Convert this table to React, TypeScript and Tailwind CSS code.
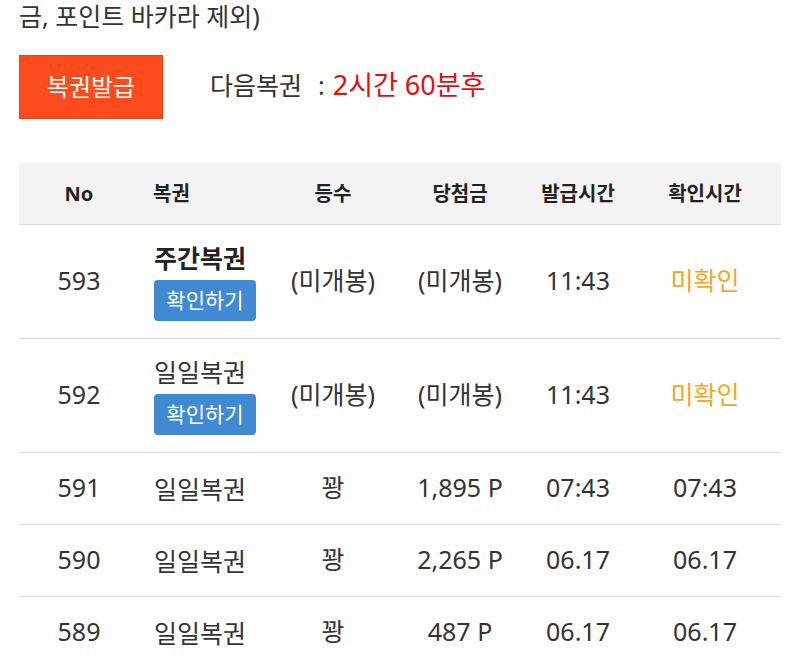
const ROWS = [
  { no: 593, name: "주간복권", bold: true, open: false, grade: "(미개봉)", prize: "(미개봉)", issued: "11:43", checked: "미확인" },
  { no: 592, name: "일일복권", bold: false, open: false, grade: "(미개봉)", prize: "(미개봉)", issued: "11:43", checked: "미확인" },
  { no: 591, name: "일일복권", bold: false, open: true, grade: "꽝", prize: "1,895 P", issued: "07:43", checked: "07:43" },
  { no: 590, name: "일일복권", bold: false, open: true, grade: "꽝", prize: "2,265 P", issued: "06.17", checked: "06.17" },
  { no: 589, name: "일일복권", bold: false, open: true, grade: "꽝", prize: "487 P", issued: "06.17", checked: "06.17" },
];

const GRID = "grid grid-cols-[120px_134px_120px_134px_102px_152px] items-center";

export default function App() {
  return (
    <div
      className="w-[800px] h-[658px] overflow-hidden bg-white text-[#333]"
      style={{ fontFamily: '"Noto Sans", "Noto Sans CJK KR", sans-serif' }}
    >
      <div className="px-[19px] h-[35px] text-[25px] leading-[32px]">금, 포인트 바카라 제외)</div>

      <div className="flex items-center px-[19px] mt-[20px]">
        <button className="w-[144px] h-[64px] bg-[#fc4b1c] text-white text-[24px] border border-[#e84212]">
          복권발급
        </button>
        <div className="ml-[47px] -mt-[3px] flex items-center text-[25px] whitespace-nowrap">
          <span>다음복권</span>
          <span className="ml-[16px] mr-[8px]">:</span>
          <span className="text-[#e01010] text-[27px]">2시간 60분후</span>
        </div>
      </div>

      <div className="mx-[19px] mt-[44px]">
        <div className={`${GRID} h-[62px] bg-[#f3f3f3] border-b border-[#dcdcdc] text-[20px] font-bold text-[#222]`}>
          <div className="text-center">No</div>
          <div className="pl-[14px]">복권</div>
          <div className="text-center">등수</div>
          <div className="text-center">당첨금</div>
          <div className="text-center">발급시간</div>
          <div className="text-center">확인시간</div>
        </div>

        {ROWS.map((r) => (
          <div
            key={r.no}
            className={`${GRID} border-b border-[#dcdcdc] text-[25px] ${r.open ? "h-[72px]" : "h-[114px]"}`}
          >
            <div className="text-center -mt-[2px]">{r.no}</div>
            <div className="pl-[15px]">
              <div className={r.bold ? "font-bold text-[#222] leading-[32px]" : "leading-[32px]"}>{r.name}</div>
              {!r.open && (
                <button className="mt-[6px] w-[102px] h-[41px] rounded-[4px] bg-[#3f8ad3] text-white text-[21px]">
                  확인하기
                </button>
              )}
            </div>
            <div className="text-center -mt-[2px]">{r.grade}</div>
            <div className="text-center -mt-[2px]">{r.prize}</div>
            <div className="text-center -mt-[2px]">{r.issued}</div>
            <div className={`text-center -mt-[2px] ${r.open ? "" : "text-[#f5a623]"}`}>{r.checked}</div>
          </div>
        ))}
      </div>
    </div>
  );
}
